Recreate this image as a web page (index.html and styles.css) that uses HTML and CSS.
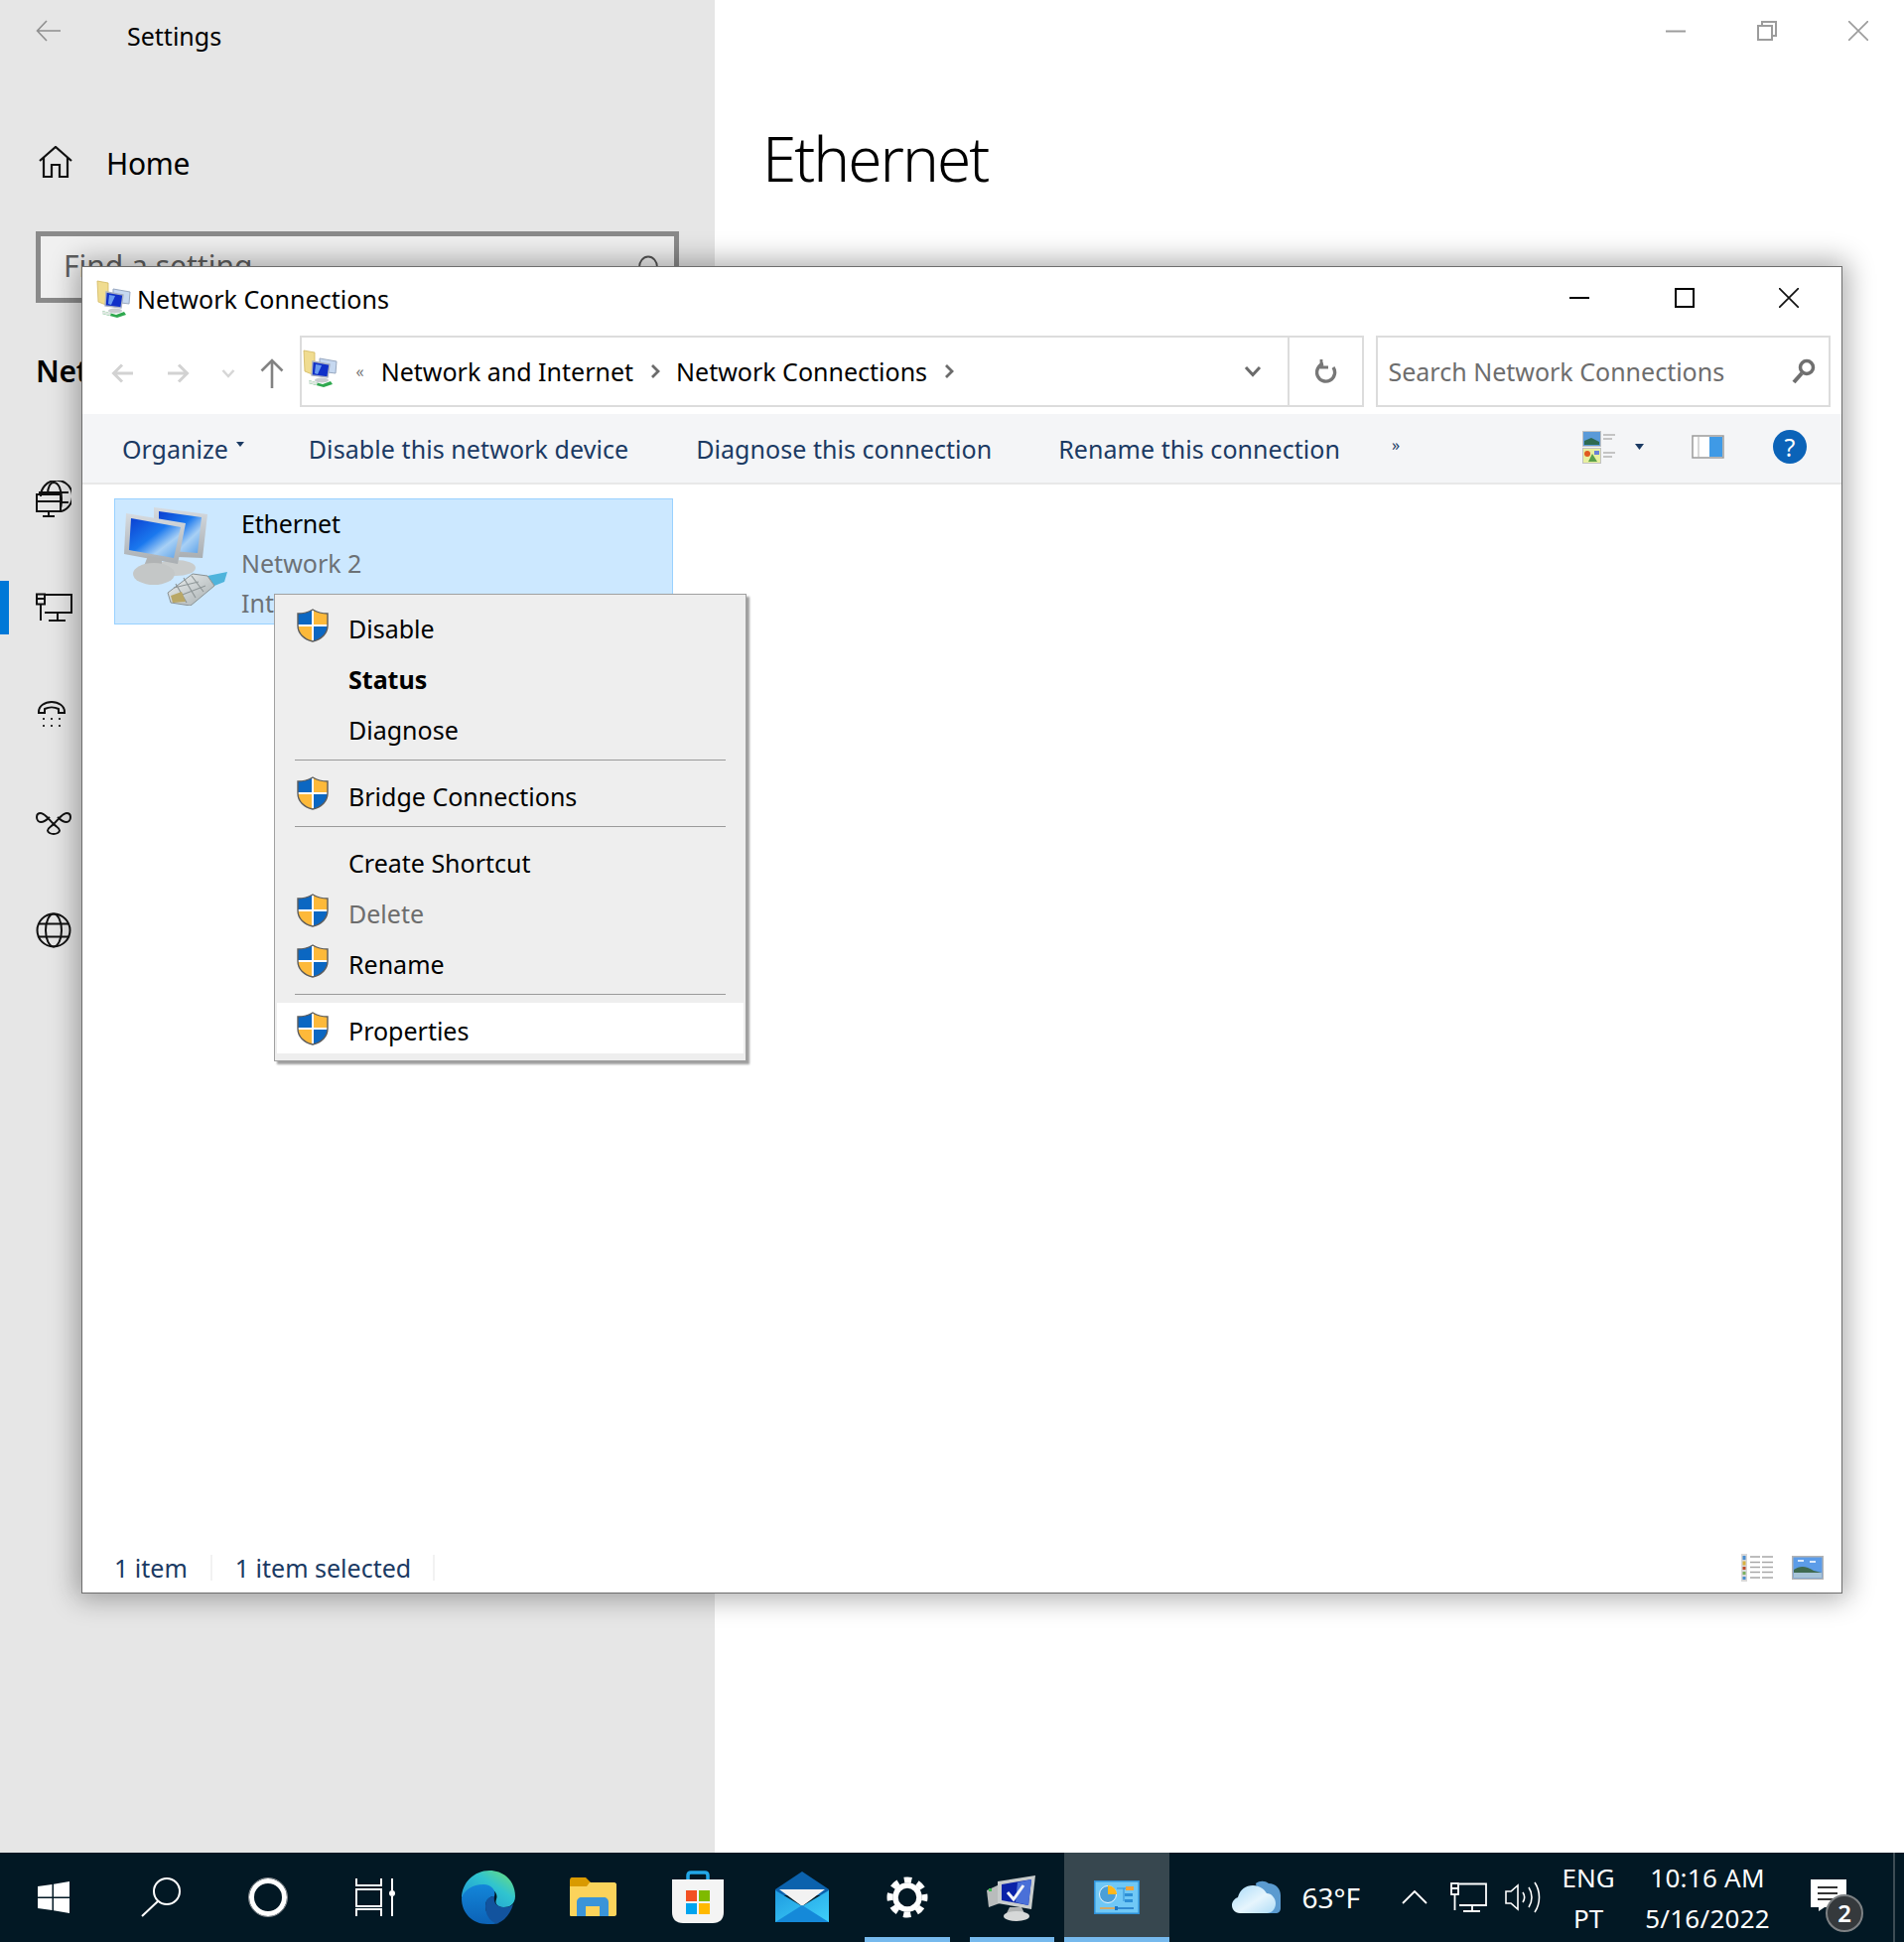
FILE: index.html
```html
<!DOCTYPE html>
<html lang="en">
<head>
<meta charset="utf-8">
<title>Network Connections</title>
<link rel="stylesheet" href="styles.css">
</head>
<body>
<svg class="sprite" xmlns="http://www.w3.org/2000/svg">
  <defs>
    <linearGradient id="scr" x1="0" y1="0" x2="1" y2="1"><stop offset="0" stop-color="#0b3fd0"/><stop offset=".45" stop-color="#1a78ee"/><stop offset=".7" stop-color="#a8d0f5"/><stop offset="1" stop-color="#5aa0e8"/></linearGradient>
    <linearGradient id="fra" x1="0" y1="0" x2="0" y2="1"><stop offset="0" stop-color="#d6dbe0"/><stop offset="1" stop-color="#a9aeb2"/></linearGradient>
    <linearGradient id="plug" x1="0" y1="0" x2="1" y2="1"><stop offset="0" stop-color="#eef2f3"/><stop offset="1" stop-color="#a6adae"/></linearGradient>
    <linearGradient id="edgeA" x1="0" y1="1" x2="1" y2="0"><stop offset="0" stop-color="#1b8fd8"/><stop offset=".6" stop-color="#30c4cf"/><stop offset="1" stop-color="#74e070"/></linearGradient>
    <linearGradient id="edgeB" x1="0" y1="0" x2="0" y2="1"><stop offset="0" stop-color="#1386d9"/><stop offset="1" stop-color="#0c62b6"/></linearGradient>
    <linearGradient id="mailA" x1="0" y1="0" x2="1" y2="1"><stop offset="0" stop-color="#1e9be0"/><stop offset="1" stop-color="#3fd0fa"/></linearGradient>
    <linearGradient id="cloudG" x1="0" y1="0" x2="1" y2="1"><stop offset="0" stop-color="#a8daf8"/><stop offset=".55" stop-color="#e6f5fd"/><stop offset="1" stop-color="#aedcf6"/></linearGradient>
    <clipPath id="shieldClip"><path d="M16 1C20 3.500 26 5 31 5V17C31 25 25 31 16 33C7 31 1 25 1 17V5C6 5 12 3.500 16 1Z"/></clipPath>
    <symbol id="shield" viewBox="0 0 32 34">
      <g clip-path="url(#shieldClip)">
        <rect x="0" y="0" width="16" height="17" fill="#0b67c2"/>
        <rect x="16" y="0" width="16" height="17" fill="#fdb93a"/>
        <rect x="0" y="17" width="16" height="17" fill="#fdb93a"/>
        <rect x="16" y="17" width="16" height="17" fill="#0b67c2"/>
        <path d="M16 0V34M0 17H32" stroke="#fff" stroke-width="2"/>
      </g>
      <path d="M16 1C20 3.500 26 5 31 5V17C31 25 25 31 16 33C7 31 1 25 1 17V5C6 5 12 3.500 16 1Z" fill="none" stroke="#5c5c5c" stroke-width="1.400"/>
    </symbol>
    <symbol id="netSmall" viewBox="0 0 36 38">
      <path d="M1 1L12 3V26L2 22Z" fill="#f0dc90" stroke="#d2b860" stroke-width=".8"/>
      <path d="M17 9L34 12L33 24L17 22Z" fill="#c6d8f0" stroke="#98a8c0"/>
      <path d="M10 12L27 15L25 28L9 26Z" fill="#1030c8" stroke="#a8b0c0" stroke-width="1.400"/>
      <path d="M13 15L19 16L15 25L12 24Z" fill="#6a9cf0"/>
      <ellipse cx="19" cy="31" rx="7" ry="2.400" fill="#c8ccd0"/>
      <path d="M6 31L20 35L28 32L30 35L21 38L6 34Z" fill="#2fa84f"/>
      <path d="M6 31L15 33.500L14 36L6 34Z" fill="#dfe8e2"/>
    </symbol>
    <symbol id="netLarge" viewBox="0 0 110 100">
      <path d="M30 1L84 8L79 52L30 50Z" fill="url(#fra)"/>
      <path d="M35 5L78 11L74 47L35 44Z" fill="url(#scr)"/>
      <ellipse cx="52" cy="62" rx="20" ry="8" fill="#c9cccc"/>
      <path d="M2 7L62 17L54 58L0 48Z" fill="url(#fra)"/>
      <path d="M7 12L57 21L50 52L5 44Z" fill="url(#scr)"/>
      <path d="M24 50L38 53L38 62L20 60Z" fill="#b0b3b4"/>
      <ellipse cx="30" cy="68" rx="21" ry="11" fill="#c4c7c7"/>
      <path d="M84 70L104 66L101 76L91 80Z" fill="#4fb4dc"/>
      <path d="M44 87L69 68L84 70L91 80L67 100L47 97Z" fill="url(#plug)" stroke="#8a9294" stroke-width="1"/>
      <path d="M50 82L75 76M56 90L82 80M60 72L72 92M68 70L80 86M52 78L63 97" stroke="#8f9798" stroke-width="1.200" fill="none"/>
      <path d="M47 90L58 86L62 96L49 97Z" fill="#b9a766"/>
    </symbol>
  </defs>
</svg>

<div class="desktop">
  <div class="screen">
    <aside class="sidebar">
      <div class="sb-title">
        <svg class="sb-back" width="26" height="22" viewBox="0 0 26 22"><path d="M25 11H2M11 1L1.500 11L11 21" fill="none" stroke="#8f8f8f" stroke-width="1.600"/></svg>
        <span class="sb-title-text">Settings</span>
      </div>
      <div class="sb-home">
        <svg class="sb-home-icon" width="34" height="32" viewBox="0 0 34 32"><path d="M1 15L17 1L33 15M5 12V31H13V19H21V31H29V12" fill="none" stroke="#111" stroke-width="2.200"/></svg>
        <span>Home</span>
      </div>
      <div class="sb-search">
        <span>Find a setting</span>
        <svg width="22" height="24" viewBox="0 0 22 24"><ellipse cx="11" cy="12" rx="9" ry="10.500" fill="none" stroke="#555" stroke-width="1.800"/></svg>
      </div>
      <h2 class="sb-head">Network &amp; Internet</h2>
      <nav class="sb-nav">
        <div class="sb-row">
          <svg width="36" height="38" viewBox="0 0 36 38"><g fill="none" stroke="#111" stroke-width="2"><path d="M5 16A16 16 0 1 1 26 31"/><path d="M12 14C12 6 15 2 18 2C23 2 26 9 26 18C26 22 26 25 25 28M3 12H33M26 22H33"/><rect x="1" y="14" width="24" height="17"/><path d="M13 31V36M7 36H19M1 21H25"/></g></svg>
        </div>
        <div class="sb-row sb-row-active">
          <svg width="37" height="30" viewBox="0 0 37 30"><g fill="none" stroke="#111" stroke-width="2"><path d="M9 2H36V20H9M22 20V28M13 28H30"/><rect x="1" y="1.500" width="8" height="10"/><path d="M1 6H9M5 12V28"/></g></svg>
        </div>
        <div class="sb-row">
          <svg width="32" height="30" viewBox="0 0 32 30"><path d="M3 12C3 6 9 2 16 2C23 2 29 6 29 12L29 13H23V9C19 7 13 7 9 9V13H3Z" fill="none" stroke="#111" stroke-width="2"/><g fill="#333"><rect x="7" y="18" width="2" height="2"/><rect x="15" y="18" width="2" height="2"/><rect x="23" y="18" width="2" height="2"/><rect x="7" y="25" width="2" height="2"/><rect x="15" y="25" width="2" height="2"/><rect x="23" y="25" width="2" height="2"/></g></svg>
        </div>
        <div class="sb-row">
          <svg width="36" height="24" viewBox="0 0 36 24"><path d="M22 6C24 8 27 11 31 11C33 11 35 9 35 6C35 3 33 2 31 2C27 2 24 7 18 13C15 16 12 17 12 19.500C12 21.500 15 23 18 23C21 23 24 21.500 24 19.500C24 17 21 16 18 13C12 7 9 2 5 2C3 2 1 3 1 6C1 9 3 11 5 11C9 11 12 8 14 6" fill="none" stroke="#111" stroke-width="2"/></svg>
        </div>
        <div class="sb-row">
          <svg width="36" height="36" viewBox="0 0 36 36"><g fill="none" stroke="#111" stroke-width="2"><circle cx="18" cy="18" r="16.500"/><ellipse cx="18" cy="18" rx="8" ry="16.500"/><path d="M3 11.500H33M3 24.500H33"/></g></svg>
        </div>
      </nav>
    </aside>
    <main class="settings-main">
      <div class="sm-controls">
        <span class="ctl"><svg width="20" height="20" viewBox="0 0 20 20"><path d="M0 10.500H20" stroke="#9c9c9c" stroke-width="2"/></svg></span>
        <span class="ctl"><svg width="20" height="20" viewBox="0 0 20 20"><path d="M5 4V1H19V15H15" fill="none" stroke="#9c9c9c" stroke-width="2"/><rect x="1" y="5" width="14" height="14" fill="none" stroke="#9c9c9c" stroke-width="2"/></svg></span>
        <span class="ctl"><svg width="20" height="20" viewBox="0 0 20 20"><path d="M0 0L20 20M20 0L0 20" stroke="#9c9c9c" stroke-width="1.600"/></svg></span>
      </div>
      <h1 class="sm-heading">Ethernet</h1>
    </main>
  </div>

  <div class="taskbar">
    <div class="tb-group">
      <span class="tb-cell"><svg width="32" height="32" viewBox="0 0 32 32"><path d="M0 5L14.500 3V15.500H0ZM16 2.700L32 0V15.500H16ZM0 17H14.500V29L0 27ZM16 17H32V32L16 29.300Z" fill="#fff"/></svg></span>
      <span class="tb-cell"><svg width="42" height="40" viewBox="0 0 42 40"><ellipse cx="27" cy="14" rx="13" ry="13" fill="none" stroke="#fff" stroke-width="2"/><path d="M18 24L2 39" stroke="#fff" stroke-width="2"/></svg></span>
      <span class="tb-cell"><svg width="40" height="40" viewBox="0 0 40 40"><circle cx="20" cy="20" r="16.500" fill="none" stroke="#fff" stroke-width="5"/><circle cx="20" cy="20" r="19.500" fill="none" stroke="#8b9095" stroke-width="1"/></svg></span>
      <span class="tb-cell"><svg width="40" height="38" viewBox="0 0 40 38"><g fill="none" stroke="#fff" stroke-width="2"><path d="M1 0V7H26V0M1 38V31H26V38"/><rect x="1" y="11" width="25" height="17"/><path d="M37 0V12M37 18V38"/></g><circle cx="37" cy="15" r="3" fill="#fff"/></svg></span>
    </div>
    <div class="tb-group tb-group-apps">
      <span class="tb-cell tb-cell-app"><svg width="56" height="54" viewBox="0 0 56 54"><path d="M1 28C1 12 14 0 29 0C45 0 55 12 55 26C55 34 49 37 44 37C38 37 34 34 36 29C38 24 34 18 26 18C14 18 4 22 1 28Z" fill="url(#edgeA)"/><path d="M1 28C3 20 12 14 23 14C31 14 36 20 34 26C30 26 25 29 25 36C25 44 31 50 39 53C35 54 31 54 27 54C12 54 1 43 1 28Z" fill="url(#edgeB)"/><path d="M25 36C25 28 30 26 34 26C33 31 35 37 44 37C48 37 51 36 53 34C50 44 44 51 36 53.500C29 51 25 44 25 36Z" fill="#12539e"/></svg></span>
      <span class="tb-cell tb-cell-app"><svg width="48" height="40" viewBox="0 0 48 40"><path d="M1 3C1 1 2 0 3 0H17L22 5L21 10H1Z" fill="#d99a00"/><path d="M1 9H18L21 5H46C47 5 48 6 48 7V37C48 38 47 39 46 39H2C1 39 1 38 1 37Z" fill="#fbd35b"/><path d="M8 39V25C8 22 10 20 13 20H35C38 20 40 22 40 25V39H31V29H17V39Z" fill="#3a94d8"/></svg></span>
      <span class="tb-cell tb-cell-app"><svg width="54" height="54" viewBox="0 0 54 54"><path d="M17 12V5C17 3 18 2 20 2H34C36 2 37 3 37 5V12" fill="none" stroke="#22a7e8" stroke-width="3.500"/><path d="M1 9H53V42C53 49 49 53 42 53H12C5 53 1 49 1 42Z" fill="#f4f4f4"/><rect x="15" y="20" width="11" height="11" fill="#f25022"/><rect x="28" y="20" width="11" height="11" fill="#7fba00"/><rect x="15" y="33" width="11" height="11" fill="#00a4ef"/><rect x="28" y="33" width="11" height="11" fill="#ffb900"/></svg></span>
      <span class="tb-cell tb-cell-app"><svg width="54" height="52" viewBox="0 0 54 52"><path d="M0 18L27 0L54 18V24H0Z" fill="#0b62ad"/><path d="M4 18H50L27 35Z" fill="#f2f2f2"/><path d="M0 19L27 35L54 19V51H0Z" fill="url(#mailA)"/><path d="M0 51L27 34L54 51Z" fill="#1589d9"/></svg></span>
      <span class="tb-cell tb-cell-app tb-running"><svg width="42" height="42" viewBox="0 0 42 42"><circle cx="21" cy="21" r="17.500" fill="none" stroke="#fff" stroke-width="6" stroke-dasharray="7.500 6.240" stroke-dashoffset="3.700"/><circle cx="21" cy="21" r="12" fill="none" stroke="#fff" stroke-width="5.500"/></svg></span>
      <span class="tb-cell tb-cell-app tb-running"><svg width="52" height="48" viewBox="0 0 52 48"><path d="M1 17L14 11V30L3 34Z" fill="#b9bcbc"/><path d="M12 8L50 2L46 36L12 30Z" fill="#c8cccc"/><path d="M16 11L46 6L43 32L16 27Z" fill="#0a22a8"/><path d="M32 9L46 6L43 32L30 29Z" fill="#4a70d8"/><path d="M22 19L28 26L38 12" fill="none" stroke="#f3f5f8" stroke-width="3"/><path d="M24 34H36L40 42H20Z" fill="#b0b3b3"/><ellipse cx="31" cy="43" rx="13" ry="5" fill="#d6d8d8"/><rect x="3" y="15" width="3" height="3" fill="#3fb950"/></svg></span>
      <span class="tb-cell tb-cell-app tb-active"><svg width="46" height="34" viewBox="0 0 46 34"><rect x=".75" y=".75" width="44.500" height="32.500" fill="#70c8f6" stroke="#2d8fd6" stroke-width="1.500"/><circle cx="14" cy="14" r="8.500" fill="#4a9fd8" stroke="#e8f6fd" stroke-width="1"/><path d="M14 14V5A9 9 0 0 1 23 14Z" fill="#ffb71b"/><path d="M23 8H37M30 8V21" stroke="#2d8fd6"/><rect x="32" y="6" width="8" height="4" fill="#f3a23a"/><rect x="31" y="13" width="8" height="3" fill="#2d8fd6"/><rect x="31" y="19" width="8" height="3" fill="#2d8fd6"/><path d="M6 28H22" stroke="#f3a23a" stroke-width="1.500"/><path d="M22 28H40" stroke="#1b76c4" stroke-width="1.500"/><rect x="21" y="26" width="3" height="4" fill="#1b76c4"/></svg></span>
    </div>
    <div class="tray">
      <svg class="tray-cloud" width="50" height="34" viewBox="0 0 50 34"><path d="M24 3C28 0 33 0 37 3C44 3 49 8 49 15V28C49 31 47 33 44 33H30Z" fill="#5b9bd0"/><path d="M8 33C3 33 0 29 0 25C0 21 3 18 6 17C8 9 14 5 21 5C27 5 32 8 35 13C40 13 44 18 44 23C44 29 40 33 35 33Z" fill="url(#cloudG)"/></svg>
      <span class="tray-temp">63°F</span>
      <svg class="tray-chev" width="26" height="14" viewBox="0 0 26 14"><path d="M1 13L13 1L25 13" fill="none" stroke="#fff" stroke-width="1.800"/></svg>
      <svg class="tray-net" width="37" height="30" viewBox="0 0 37 30"><g fill="none" stroke="#fff" stroke-width="1.800"><path d="M9 1.500H36V23H9M22 23V28M13 29H30"/><rect x="1" y="1" width="7" height="11"/><path d="M1 6H8M4.500 12V28"/></g></svg>
      <svg class="tray-vol" width="38" height="34" viewBox="0 0 38 34"><g fill="none" stroke="#fff" stroke-width="1.600"><path d="M1 11H6L13 5V29L6 23H1Z"/><path d="M18 12C20 15 20 19 18 22M24 7C28 13 28 21 24 27M30 2C36 11 36 23 30 32"/></g></svg>
      <div class="tray-lang"><span>ENG</span><span>PT</span></div>
      <div class="tray-clock"><span>10:16 AM</span><span>5/16/2022</span></div>
      <div class="tray-note">
        <svg width="36" height="32" viewBox="0 0 36 32"><path d="M0 0H36V28H14L8 32V28H0Z" fill="#fff"/><path d="M7 8H27M7 14H27M7 20H27" stroke="#333" stroke-width="2"/></svg>
        <span class="tray-badge">2</span>
      </div>
    </div>
  </div>

  <section class="win">
    <header class="win-title">
      <svg class="win-title-icon" width="36" height="38"><use href="#netSmall"/></svg>
      <span class="win-title-text">Network Connections</span>
      <div class="win-ctls">
        <span class="win-ctl"><svg width="20" height="20" viewBox="0 0 20 20"><path d="M0 10H20" stroke="#000" stroke-width="2"/></svg></span>
        <span class="win-ctl"><svg width="20" height="20" viewBox="0 0 20 20"><rect x="1" y="1" width="18" height="18" fill="none" stroke="#000" stroke-width="2"/></svg></span>
        <span class="win-ctl"><svg width="20" height="20" viewBox="0 0 20 20"><path d="M0 0L20 20M20 0L0 20" stroke="#111" stroke-width="1.700"/></svg></span>
      </div>
    </header>

    <div class="win-addr">
      <div class="nav-cell nav-back"><svg width="22" height="20" viewBox="0 0 22 20"><path d="M22 10H3M11 1.500L2.500 10L11 18.500" fill="none" stroke="#d2d2d2" stroke-width="3"/></svg></div>
      <div class="nav-cell nav-fwd"><svg width="22" height="20" viewBox="0 0 22 20"><path d="M0 10H19M11 1.500L19.500 10L11 18.500" fill="none" stroke="#d2d2d2" stroke-width="3"/></svg></div>
      <div class="nav-cell nav-down"><svg width="14" height="10" viewBox="0 0 14 10"><path d="M1.500 2L7 8L12.500 2" fill="none" stroke="#d6d6d6" stroke-width="2.500"/></svg></div>
      <div class="nav-cell nav-up"><svg width="24" height="30" viewBox="0 0 24 30"><path d="M12 30V2M1.500 12.500L12 2L22.500 12.500" fill="none" stroke="#838383" stroke-width="2.600"/></svg></div>
      <div class="addr-box">
        <svg class="addr-icon" width="36" height="38"><use href="#netSmall"/></svg>
        <span class="addr-more">«</span>
        <span class="crumb">Network and Internet</span>
        <svg class="crumb-sep" width="10" height="16" viewBox="0 0 10 16"><path d="M2 2L8 8L2 14" fill="none" stroke="#6b6b6b" stroke-width="2.800"/></svg>
        <span class="crumb">Network Connections</span>
        <svg class="crumb-sep" width="10" height="16" viewBox="0 0 10 16"><path d="M2 2L8 8L2 14" fill="none" stroke="#6b6b6b" stroke-width="2.800"/></svg>
        <svg class="addr-drop" width="18" height="12" viewBox="0 0 18 12"><path d="M2 2L9 9.500L16 2" fill="none" stroke="#6b6b6b" stroke-width="3"/></svg>
        <div class="addr-refresh"><svg width="22" height="24" viewBox="0 0 22 24"><path d="M8 4.500A9 9 0 1 0 18 8" fill="none" stroke="#777" stroke-width="3.400"/><path d="M6 0V8H13" fill="none" stroke="#777" stroke-width="2.800"/></svg></div>
      </div>
      <div class="search-box">
        <span>Search Network Connections</span>
        <svg width="24" height="26" viewBox="0 0 24 26"><circle cx="15" cy="9" r="6.500" fill="none" stroke="#6f6f6f" stroke-width="3.500"/><path d="M10 15L2 24" stroke="#6f6f6f" stroke-width="4"/></svg>
      </div>
    </div>

    <div class="win-cmd">
      <span class="cmd cmd-org">Organize</span>
      <svg class="cmd-arrow" width="8" height="5" viewBox="0 0 8 5"><path d="M0 0H8L4 5Z" fill="#1b3a63"/></svg>
      <span class="cmd cmd-dis">Disable this network device</span>
      <span class="cmd cmd-dia">Diagnose this connection</span>
      <span class="cmd cmd-ren">Rename this connection</span>
      <span class="cmd-more">»</span>
      <svg class="cmd-views" width="34" height="33" viewBox="0 0 34 33"><rect x=".5" y=".5" width="18" height="15" fill="#5a9ad8" stroke="#c2c2c2"/><path d="M2 10L9 7L17 11V14H2Z" fill="#2d6a50"/><rect x=".5" y="17.500" width="18" height="15" fill="#e8f0a0" stroke="#c2c2c2"/><path d="M6 31L10 23L15 31Z" fill="#5aa04a"/><circle cx="5" cy="23" r="3" fill="#e05a20"/><rect x="12" y="20" width="5" height="4" fill="#6a80d8"/><path d="M21 4H33M21 8H30M21 22H33M21 26H30" stroke="#b4b4b4" stroke-width="1.500"/></svg>
      <svg class="cmd-views-arrow" width="9" height="6" viewBox="0 0 9 6"><path d="M0 0H9L4.500 6Z" fill="#1b3a63"/></svg>
      <svg class="cmd-pane" width="33" height="24" viewBox="0 0 33 24"><rect x="1" y="1" width="31" height="22" fill="#fff" stroke="#9a9a9a" stroke-width="1.500"/><path d="M7 1V23" stroke="#b0b0b0"/><rect x="18" y="2" width="13" height="20" fill="#3f9ae6"/></svg>
      <span class="cmd-help">?</span>
    </div>

    <div class="win-content">
      <div class="item">
        <svg class="item-icon" width="110" height="100"><use href="#netLarge"/></svg>
        <div class="item-text">
          <span class="item-name">Ethernet</span>
          <span class="item-sub">Network 2</span>
          <span class="item-sub">Intel(R) PRO/1000 MT Desktop Ad...</span>
        </div>
      </div>
    </div>

    <footer class="win-status">
      <span class="st-cell st-first">1 item</span>
      <span class="st-cell st-second">1 item selected</span>
      <svg class="st-details" width="32" height="28" viewBox="0 0 32 28"><rect x="0" y="0" width="6" height="28" fill="#d8d8d8"/><rect x="1.500" y="2" width="3" height="4" fill="#4a8ed0"/><rect x="1.500" y="7.500" width="3" height="4" fill="#d8b040"/><rect x="1.500" y="13" width="3" height="3" fill="#c04a2a"/><rect x="1.500" y="18" width="3" height="3" fill="#7ab060"/><rect x="1.500" y="23" width="3" height="3" fill="#4a8ed0"/><path d="M9 3H19M21 3H32M9 8.500H19M21 8.500H32M9 13.500H19M21 13.500H32M9 18.500H19M21 18.500H32M9 24H19M21 24H32" stroke="#a8a8a8" stroke-width="1.500"/></svg>
      <svg class="st-thumb" width="32" height="24" viewBox="0 0 32 24"><rect x=".75" y=".75" width="30.500" height="22.500" fill="#5c9ce8" stroke="#b4b4b4" stroke-width="1.500"/><path d="M2 14C8 10 14 10 22 15L30 17V19H2Z" fill="#3f6a50"/><rect x="2" y="17" width="28" height="5" fill="#a8c4d8"/><path d="M6 5H12M18 6H24" stroke="#dbeafc" stroke-width="2"/></svg>
    </footer>
  </section>

  <div class="menu">
    <div class="mi"><svg class="mi-shield" width="32" height="34"><use href="#shield"/></svg><span>Disable</span></div>
    <div class="mi mi-bold"><span>Status</span></div>
    <div class="mi"><span>Diagnose</span></div>
    <div class="msep"></div>
    <div class="mi"><svg class="mi-shield" width="32" height="34"><use href="#shield"/></svg><span>Bridge Connections</span></div>
    <div class="msep"></div>
    <div class="mi"><span>Create Shortcut</span></div>
    <div class="mi mi-dim"><svg class="mi-shield" width="32" height="34"><use href="#shield"/></svg><span>Delete</span></div>
    <div class="mi"><svg class="mi-shield" width="32" height="34"><use href="#shield"/></svg><span>Rename</span></div>
    <div class="msep msep-tight"></div>
    <div class="mi mi-hot"><svg class="mi-shield" width="32" height="34"><use href="#shield"/></svg><span>Properties</span></div>
  </div>
</div>
</body>
</html>
```

FILE: styles.css
```css
* { box-sizing: border-box; }
html, body { margin: 0; padding: 0; }
body { font-family: "Noto Sans", "Open Sans", sans-serif; color: #000; background: #fff; }
svg { display: block; flex: none; }
.sprite { position: absolute; width: 0; height: 0; }

.desktop { position: relative; width: 1918px; height: 1956px; overflow: hidden; display: flex; flex-direction: column; }
.screen { flex: 1; display: flex; min-height: 0; }

/* settings sidebar */
.sidebar { width: 720px; background: #e6e6e6; flex: none; }
.sb-title { height: 72px; display: flex; align-items: center; padding-left: 36px; }
.sb-back { margin-top: -10px; }
.sb-title-text { margin-left: 66px; font-size: 25px; }
.sb-home { height: 60px; margin-top: 62px; padding-left: 39px; display: flex; align-items: center; gap: 34px; font-size: 30px; letter-spacing: -.3px; }
.sb-home-icon { margin-top: -3px; }
.sb-search { height: 72px; margin: 39px 36px 0; border: 5px solid #8a8a8a; background: #f0f0f0; display: flex; justify-content: space-between; padding: 9px 15px 0 23px; font-size: 30px; color: #5f5f5f; }
.sb-search svg { margin-top: 10px; }
.sb-head { margin: 49px 0 0 36px; font-size: 30px; font-weight: 600; line-height: 40px; height: 40px; letter-spacing: -.3px; white-space: nowrap; }
.sb-nav { margin-top: 55px; }
.sb-row { height: 108.500px; padding-left: 36px; display: flex; align-items: center; position: relative; }
.sb-row-active::before { content: ""; position: absolute; left: 0; top: 27px; width: 9px; height: 54px; background: #0078d7; }

/* settings main */
.settings-main { flex: 1; background: #fff; }
.sm-controls { display: flex; justify-content: flex-end; height: 62px; }
.ctl { width: 92px; display: flex; align-items: center; justify-content: center; }
.sm-heading { margin: 55px 0 0 48px; font-size: 62px; font-weight: 300; line-height: 84px; letter-spacing: -2px; }

/* taskbar */
.taskbar { height: 90px; flex: none; background: #021824; display: flex; color: #fff; }
.tb-group { display: flex; }
.tb-group-apps { margin-left: 7px; }
.tb-cell { width: 108px; display: flex; align-items: center; justify-content: center; position: relative; }
.tb-cell-app { width: 105.500px; }
.tb-running::after { content: ""; position: absolute; left: 10px; right: 10px; bottom: 0; height: 5px; background: #76b9ed; }
.tb-active { background: #37474f; }
.tb-active::after { content: ""; position: absolute; left: 0; right: 0; bottom: 0; height: 5px; background: #76b9ed; }

.tray { flex: 1; display: flex; align-items: center; position: relative; }
.tray-cloud { margin-left: 63px; }
.tray-temp { margin-left: 21px; font-size: 28px; }
.tray-chev { margin-left: 42px; }
.tray-net { margin-left: 23px; }
.tray-vol { margin-left: 18px; }
.tray-lang { margin-left: 12px; width: 68px; display: flex; flex-direction: column; align-items: center; gap: 11px; font-size: 26px; line-height: 30px; }
.tray-clock { margin-left: 6px; width: 160px; display: flex; flex-direction: column; align-items: center; gap: 11px; font-size: 26px; line-height: 30px; letter-spacing: .25px; }
.tray-note { margin-left: 24px; position: relative; width: 46px; height: 60px; padding-top: 12px; }
.tray-badge { position: absolute; left: 15px; top: 27px; width: 38px; height: 38px; border-radius: 50%; background: #35393c; border: 2px solid #7d8184; color: #fff; font-size: 24px; font-weight: 600; line-height: 33px; text-align: center; }
.tray::after { content: ""; position: absolute; right: 9px; top: 0; bottom: 0; width: 2px; background: #3d4c55; }

/* explorer window */
.win { position: absolute; left: 82px; top: 268px; width: 1774px; height: 1337px; background: #fff; border: 1.500px solid #6e6e6e; box-shadow: 0 0 26px 5px rgba(0, 0, 0, .33); display: flex; flex-direction: column; }
.win-title { height: 69px; display: flex; align-items: flex-start; padding-left: 14px; flex: none; }
.win-title-icon { margin-top: 13px; }
.win-title-text { margin: 14px 0 0 5px; font-size: 25px; line-height: 36px; letter-spacing: .05px; }
.win-ctls { margin-left: auto; display: flex; height: 62px; }
.win-ctl { width: 105.500px; display: flex; align-items: center; justify-content: center; }

.win-addr { height: 72px; flex: none; display: flex; align-items: stretch; padding-left: 11px; }
.nav-cell { display: flex; align-items: center; justify-content: center; padding-top: 4px; }
.nav-back, .nav-fwd { width: 57px; }
.nav-down { width: 43px; }
.nav-up { width: 45px; }
.addr-box { width: 1072.500px; margin-left: 5.500px; border: 2px solid #dcdcdc; display: flex; align-items: center; font-size: 25px; }
.addr-icon { margin-left: 1px; margin-top: -6px; }
.addr-more { margin-left: 18px; color: #777; font-size: 16px; }
.crumb { white-space: nowrap; }
.addr-more + .crumb { margin-left: 17px; }
.crumb-sep { margin: 0 16.500px; }
.addr-drop { margin-left: auto; margin-right: 26px; }
.addr-refresh { width: 75px; align-self: stretch; border-left: 2px solid #dcdcdc; display: flex; align-items: center; justify-content: center; }
.search-box { width: 458px; margin-left: 11.500px; border: 2px solid #dcdcdc; display: flex; align-items: center; justify-content: space-between; padding: 0 13px 0 11px; font-size: 25px; color: #6d6d6d; white-space: nowrap; }

.win-cmd { height: 71px; flex: none; margin-top: 7px; background: #f4f5f7; border-bottom: 2px solid #e8e8e8; display: flex; align-items: center; padding-left: 40px; color: #1b3a63; font-size: 25px; white-space: nowrap; }
.cmd-arrow { margin-left: 8px; margin-top: -8px; }
.cmd-dis { margin-left: 65px; letter-spacing: .08px; }
.cmd-dia { margin-left: 68px; letter-spacing: .05px; }
.cmd-ren { margin-left: 67px; letter-spacing: .05px; }
.cmd-more { margin-left: 52px; font-size: 16px; margin-top: -8px; }
.cmd-views { margin-left: auto; margin-top: -2px; }
.cmd-views-arrow { margin-left: 19px; margin-top: -4px; }
.cmd-pane { margin-left: 48px; margin-top: -4px; }
.cmd-help { margin: -4px 35px 0 49px; width: 34px; height: 34px; border-radius: 50%; background: #0b63b8; color: #fff; font-size: 25px; line-height: 34px; text-align: center; }

.win-content { flex: 1; min-height: 0; padding: 14px 0 0 32px; }
.item { width: 563px; height: 127px; background: #cce8ff; border: 1.500px solid #99d1ff; display: flex; padding: 7px 0 0 9px; overflow: hidden; }
.item-text { margin-left: 8px; margin-top: -3px; display: flex; flex-direction: column; font-size: 25px; line-height: 40px; white-space: nowrap; }
.item-name { letter-spacing: -.2px; }
.item-sub { color: #6c7176; }

.win-status { height: 51px; flex: none; display: flex; align-items: center; color: #1b3a63; font-size: 25px; padding-left: 32px; }
.st-cell { border-right: 2px solid #f2f2f2; line-height: 24px; height: 26px; display: flex; align-items: center; white-space: nowrap; }
.st-first { padding-right: 23px; }
.st-second { margin-left: 23px; padding-right: 22px; }
.st-details { margin-left: auto; }
.st-thumb { margin: 0 18px 0 19px; }

/* context menu */
.menu { position: absolute; left: 276px; top: 598px; width: 476px; height: 471px; background: #eeeeee; border: 1.500px solid #a0a0a0; box-shadow: 3px 3px 2px rgba(0, 0, 0, .38); padding: 8px 2px 0; }
.mi { height: 51px; position: relative; padding-left: 72px; display: flex; align-items: center; font-size: 25px; white-space: nowrap; }
.mi-shield { position: absolute; left: 20px; top: 6px; }
.mi-bold { font-weight: 700; }
.mi-dim { color: #6d6d6d; }
.mi-hot { background: #fff; padding-top: 5px; }
.mi-hot .mi-shield { top: 9px; }
.msep { height: 1px; background: #9a9a9a; margin: 5px 18px 10px 18px; }
.msep-tight { margin-bottom: 8px; }
```
